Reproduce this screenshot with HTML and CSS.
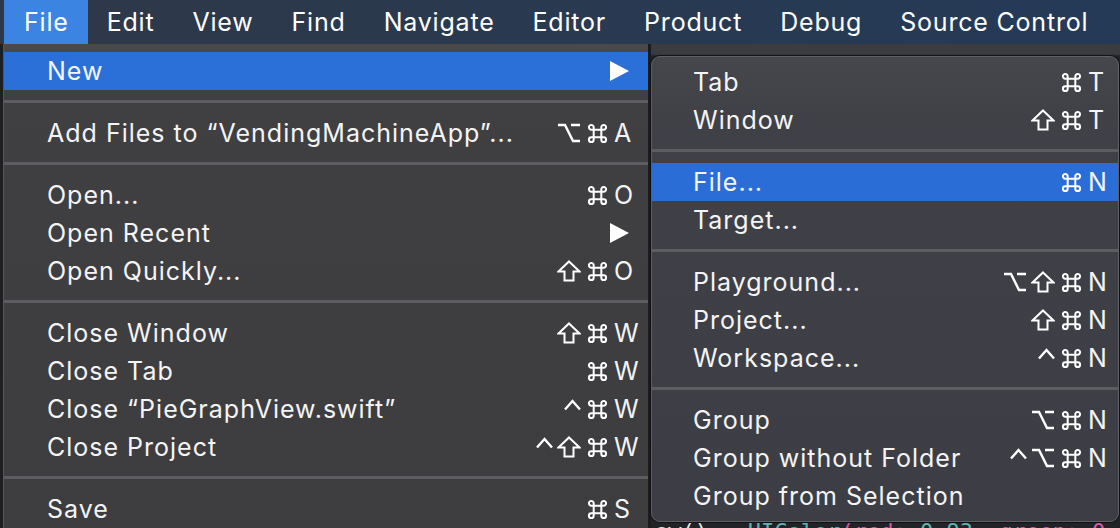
FILE: index.html
```html
<!DOCTYPE html>
<html>
<head>
<meta charset="utf-8">
<link rel="stylesheet" href="styles.css">
</head>
<body>
<svg width="0" height="0" class="defs">
  <defs>
    <symbol id="cmd" viewBox="0 0 22 22"><path d="M7 7 V4.5 A2.5 2.5 0 1 0 4.5 7 H17.5 A2.5 2.5 0 1 0 15 4.5 V17.5 A2.5 2.5 0 1 0 17.5 15 H4.5 A2.5 2.5 0 1 0 7 17.5 Z" fill="none" stroke="#fff" stroke-width="2.1" stroke-linejoin="round"/></symbol>
    <symbol id="shift" viewBox="0 0 24 22"><path d="M12 1.5 L22.5 11.5 H16.5 V20.5 H7.5 V11.5 H1.5 Z" fill="none" stroke="#fff" stroke-width="2" stroke-linejoin="miter"/></symbol>
    <symbol id="opt" viewBox="0 0 24 22"><path d="M1 3 H8 L16 19 H23 M14 3 H23" fill="none" stroke="#fff" stroke-width="2.4"/></symbol>
    <symbol id="ctrl" viewBox="0 0 17 12"><path d="M1 10.5 L8.5 2 L16 10.5" fill="none" stroke="#fff" stroke-width="2.4"/></symbol>
    <symbol id="tri" viewBox="0 0 19 20"><polygon points="0,0 19,10 0,20" fill="#fff"/></symbol>
  </defs>
</svg>
<div class="menubar">
  <span class="mb-item active">File</span>
  <span class="mb-item">Edit</span>
  <span class="mb-item">View</span>
  <span class="mb-item">Find</span>
  <span class="mb-item">Navigate</span>
  <span class="mb-item">Editor</span>
  <span class="mb-item">Product</span>
  <span class="mb-item">Debug</span>
  <span class="mb-item">Source Control</span>
</div>
<div class="stage">
  <div class="gutter"></div>
  <div class="menu main">
    <div class="item hl"><span class="label">New</span><span class="mods"></span><span class="key"><svg class="arrow"><use href="#tri"/></svg></span></div>
    <div class="sep"></div>
    <div class="item"><span class="label">Add Files to “VendingMachineApp”...</span><span class="mods"><span class="m"><svg class="g-opt"><use href="#opt"/></svg></span><span class="m"><svg class="g-cmd"><use href="#cmd"/></svg></span></span><span class="key">A</span></div>
    <div class="sep"></div>
    <div class="item"><span class="label">Open...</span><span class="mods"><span class="m"><svg class="g-cmd"><use href="#cmd"/></svg></span></span><span class="key">O</span></div>
    <div class="item"><span class="label">Open Recent</span><span class="mods"></span><span class="key"><svg class="arrow"><use href="#tri"/></svg></span></div>
    <div class="item"><span class="label">Open Quickly...</span><span class="mods"><span class="m"><svg class="g-shift"><use href="#shift"/></svg></span><span class="m"><svg class="g-cmd"><use href="#cmd"/></svg></span></span><span class="key">O</span></div>
    <div class="sep"></div>
    <div class="item"><span class="label">Close Window</span><span class="mods"><span class="m"><svg class="g-shift"><use href="#shift"/></svg></span><span class="m"><svg class="g-cmd"><use href="#cmd"/></svg></span></span><span class="key">W</span></div>
    <div class="item"><span class="label">Close Tab</span><span class="mods"><span class="m"><svg class="g-cmd"><use href="#cmd"/></svg></span></span><span class="key">W</span></div>
    <div class="item"><span class="label">Close “PieGraphView.swift”</span><span class="mods"><span class="m c"><svg class="g-ctrl"><use href="#ctrl"/></svg></span><span class="m"><svg class="g-cmd"><use href="#cmd"/></svg></span></span><span class="key">W</span></div>
    <div class="item"><span class="label">Close Project</span><span class="mods"><span class="m c"><svg class="g-ctrl"><use href="#ctrl"/></svg></span><span class="m"><svg class="g-shift"><use href="#shift"/></svg></span><span class="m"><svg class="g-cmd"><use href="#cmd"/></svg></span></span><span class="key">W</span></div>
    <div class="sep"></div>
    <div class="item"><span class="label">Save</span><span class="mods"><span class="m"><svg class="g-cmd"><use href="#cmd"/></svg></span></span><span class="key">S</span></div>
  </div>
  <div class="divider"></div>
  <div class="side">
    <div class="menu sub">
      <div class="item"><span class="label">Tab</span><span class="mods"><span class="m"><svg class="g-cmd"><use href="#cmd"/></svg></span></span><span class="key">T</span></div>
      <div class="item"><span class="label">Window</span><span class="mods"><span class="m"><svg class="g-shift"><use href="#shift"/></svg></span><span class="m"><svg class="g-cmd"><use href="#cmd"/></svg></span></span><span class="key">T</span></div>
      <div class="sep"></div>
      <div class="item hl"><span class="label">File...</span><span class="mods"><span class="m"><svg class="g-cmd"><use href="#cmd"/></svg></span></span><span class="key">N</span></div>
      <div class="item"><span class="label">Target...</span><span class="mods"></span><span class="key"></span></div>
      <div class="sep"></div>
      <div class="item"><span class="label">Playground...</span><span class="mods"><span class="m"><svg class="g-opt"><use href="#opt"/></svg></span><span class="m"><svg class="g-shift"><use href="#shift"/></svg></span><span class="m"><svg class="g-cmd"><use href="#cmd"/></svg></span></span><span class="key">N</span></div>
      <div class="item"><span class="label">Project...</span><span class="mods"><span class="m"><svg class="g-shift"><use href="#shift"/></svg></span><span class="m"><svg class="g-cmd"><use href="#cmd"/></svg></span></span><span class="key">N</span></div>
      <div class="item"><span class="label">Workspace...</span><span class="mods"><span class="m c"><svg class="g-ctrl"><use href="#ctrl"/></svg></span><span class="m"><svg class="g-cmd"><use href="#cmd"/></svg></span></span><span class="key">N</span></div>
      <div class="sep"></div>
      <div class="item"><span class="label">Group</span><span class="mods"><span class="m"><svg class="g-opt"><use href="#opt"/></svg></span><span class="m"><svg class="g-cmd"><use href="#cmd"/></svg></span></span><span class="key">N</span></div>
      <div class="item"><span class="label">Group without Folder</span><span class="mods"><span class="m c"><svg class="g-ctrl"><use href="#ctrl"/></svg></span><span class="m"><svg class="g-opt"><use href="#opt"/></svg></span><span class="m"><svg class="g-cmd"><use href="#cmd"/></svg></span></span><span class="key">N</span></div>
      <div class="item"><span class="label">Group from Selection</span><span class="mods"></span><span class="key"></span></div>
    </div>
    <div class="code"><span class="w">ow() = </span><span class="t">UIColor</span><span class="p">(red: </span><span class="t">0.93</span><span class="p">, green: 0.31</span></div>
  </div>
</div>
</body>
</html>
```
FILE: styles.css
```css
* { box-sizing: border-box; }
html, body { margin: 0; padding: 0; }
body {
  width: 1120px;
  height: 528px;
  overflow: hidden;
  background: #202124;
  font-family: "Inter", "Noto Sans", sans-serif;
  color: #f3f3f3;
}
.defs { position: absolute; width: 0; height: 0; }
.menubar {
  height: 44px;
  display: flex;
  align-items: stretch;
  background: linear-gradient(90deg, #2f3848 0%, #283a52 60%, #253a58 100%);
  padding-left: 4px;
}
.mb-item {
  display: flex;
  align-items: center;
  padding: 0 19px;
  font-size: 25px;
  letter-spacing: 0.8px;
  color: #fff;
  white-space: nowrap;
}
.mb-item.active { background: #3b84e2; padding-left: 20px; }
.stage {
  display: flex;
  height: 484px;
}
.gutter {
  flex: 0 0 4px;
  background: #1e1f22;
  border-right: 1px solid #55565a;
}
.menu.main {
  flex: 0 0 644px;
  padding-top: 8px;
  background: linear-gradient(180deg, #4a4a4d 0px, #404043 40px, #3d3d40 100%);
}
.divider {
  flex: 0 0 3px;
  background: #1c1c1f;
}
.side {
  flex: 1 1 auto;
  min-width: 0;
  display: flex;
  flex-direction: column;
  background: linear-gradient(180deg, #3b3c40 0px, #3b3c40 10px, #222327 12px);
}
.menu.sub {
  flex: 0 0 auto;
  margin-top: 12px;
  width: 468px;
  height: 466px;
  border: 1px solid #5f6065;
  border-radius: 9px;
  padding-top: 6px;
  background: linear-gradient(180deg, #46474c 0px, #404147 60px, #3d3e45 100%);
  box-shadow: 0 0 0 1px rgba(0,0,0,0.5);
  overflow: hidden;
}
.item {
  display: grid;
  grid-template-columns: 1fr auto 25px;
  align-items: center;
  height: 38px;
  font-size: 25px;
  letter-spacing: 1px;
  white-space: nowrap;
}
.main .item { padding: 0 12px 0 43px; }
.sub .item { padding: 0 8px 0 41px; }
.item.hl { background: #2a6dd6; }
.main .item.hl { background: #2b6fd8; }
.label { color: #f4f4f4; }
.mods {
  display: flex;
  justify-content: flex-end;
  align-items: center;
  height: 38px;
}
.m {
  width: 28px;
  height: 38px;
  display: flex;
  align-items: center;
  justify-content: center;
}
.m.c { width: 22px; align-items: flex-start; }
.g-cmd { width: 21px; height: 21px; margin-left: 1px; }
.g-shift { width: 24px; height: 22px; }
.g-opt { width: 24px; height: 22px; }
.g-ctrl { width: 17px; height: 12px; margin-top: 9px; }
.key {
  padding-left: 3px;
  display: flex;
  align-items: center;
  letter-spacing: 0;
}
.arrow { display: block; width: 19px; height: 20px; margin-left: -4px; }
.sep {
  height: 3px;
  margin: 10px 0 11px;
  background: #5c5c61;
}
.code {
  height: 6px;
  overflow: hidden;
  padding-left: 4px;
  font-family: "DejaVu Sans Mono", monospace;
  font-size: 22px;
  line-height: 20px;
  white-space: nowrap;
}
.code .w { color: #e8e8e8; }
.code .t { color: #5fb3b3; }
.code .p { color: #d45aa8; }
```
